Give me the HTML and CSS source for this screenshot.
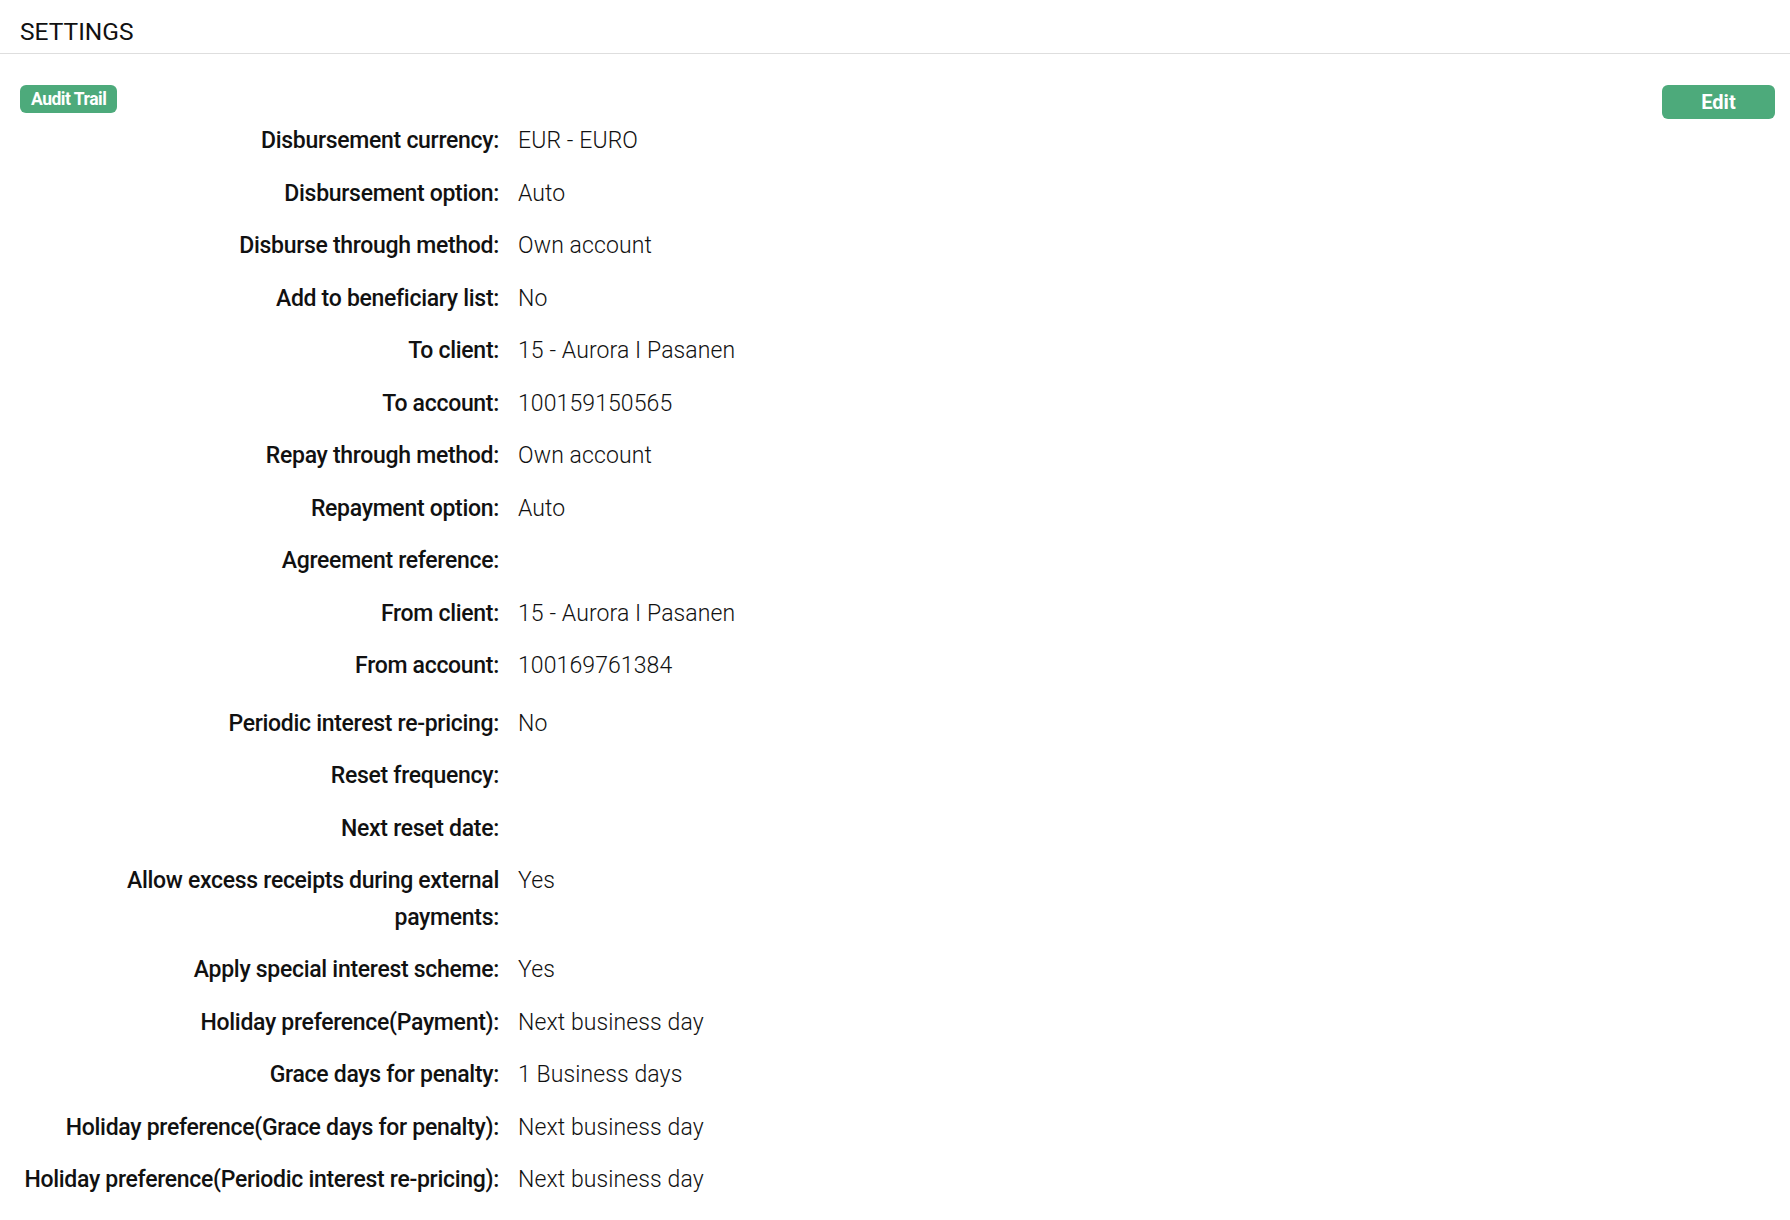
FILE: index.html
```html
<!DOCTYPE html>
<html lang="en">
<head>
<meta charset="UTF-8">
<meta name="viewport" content="width=device-width, initial-scale=1.0">
<title>Settings</title>
<link rel="stylesheet" href="styles.css">
</head>
<body>

<div class="page-title">SETTINGS</div>

<div class="settings">
    <div class="toolbar">
        <button class="btn-edit">Edit</button>
        <span class="badge">Audit Trail</span>
    </div>

    <div class="group">
        <div class="row"><div class="label">Disbursement currency:</div><div class="value">EUR - EURO</div></div>
        <div class="row"><div class="label">Disbursement option:</div><div class="value">Auto</div></div>
        <div class="row"><div class="label">Disburse through method:</div><div class="value">Own account</div></div>
        <div class="row"><div class="label">Add to beneficiary list:</div><div class="value">No</div></div>
        <div class="row"><div class="label">To client:</div><div class="value">15 - Aurora I Pasanen</div></div>
        <div class="row"><div class="label">To account:</div><div class="value">100159150565</div></div>
        <div class="row"><div class="label">Repay through method:</div><div class="value">Own account</div></div>
        <div class="row"><div class="label">Repayment option:</div><div class="value">Auto</div></div>
        <div class="row"><div class="label">Agreement reference:</div><div class="value"></div></div>
        <div class="row"><div class="label">From client:</div><div class="value">15 - Aurora I Pasanen</div></div>
        <div class="row"><div class="label">From account:</div><div class="value">100169761384</div></div>
    </div>

    <div class="group second">
        <div class="row"><div class="label">Periodic interest re-pricing:</div><div class="value">No</div></div>
        <div class="row"><div class="label">Reset frequency:</div><div class="value"></div></div>
        <div class="row"><div class="label">Next reset date:</div><div class="value"></div></div>
        <div class="row"><div class="label">Allow excess receipts during external payments:</div><div class="value">Yes</div></div>
        <div class="row"><div class="label">Apply special interest scheme:</div><div class="value">Yes</div></div>
        <div class="row"><div class="label">Holiday preference(Payment):</div><div class="value">Next business day</div></div>
        <div class="row"><div class="label">Grace days for penalty:</div><div class="value">1 Business days</div></div>
        <div class="row"><div class="label">Holiday preference(Grace days for penalty):</div><div class="value">Next business day</div></div>
        <div class="row"><div class="label">Holiday preference(Periodic interest re-pricing):</div><div class="value">Next business day</div></div>
    </div>
</div>

</body>
</html>
```

FILE: styles.css
```css
body {
    margin: 0;
    padding: 0;
    background: #fff;
    color: #111;
    font-family: Roboto, "Noto Sans", sans-serif;
}

.page-title {
    height: 54px;
    box-sizing: border-box;
    padding: 17px 20px 0;
    font-size: 24.5px;
    line-height: 30px;
    font-weight: 400;
    color: #111;
    border-bottom: 1px solid #dedede;
}

.settings {
    padding: 31px 15px 0 20px;
}

.toolbar {
    height: 30px;
}

.badge {
    display: inline-block;
    height: 28px;
    line-height: 28px;
    padding: 0 11px;
    background: #4daa7b;
    color: #fff;
    font-size: 17.5px;
    font-weight: 700;
    letter-spacing: -0.5px;
    border-radius: 6px;
}

.btn-edit {
    float: right;
    width: 113px;
    height: 34px;
    border: none;
    border-radius: 6px;
    background: #4daa7b;
    color: #fff;
    font-family: Roboto, "Noto Sans", sans-serif;
    font-size: 20px;
    font-weight: 700;
    cursor: pointer;
}

.group.second {
    margin-top: 5px;
}

.row {
    display: flex;
    padding: 8px 0;
    font-size: 23px;
    line-height: 36.5px;
}

.label {
    width: 479px;
    flex: none;
    text-align: right;
    font-weight: 500;
    letter-spacing: -0.3px;
}

.value {
    margin-left: 19px;
    font-weight: 300;
    letter-spacing: 0.1px;
    color: #111;
}
```
